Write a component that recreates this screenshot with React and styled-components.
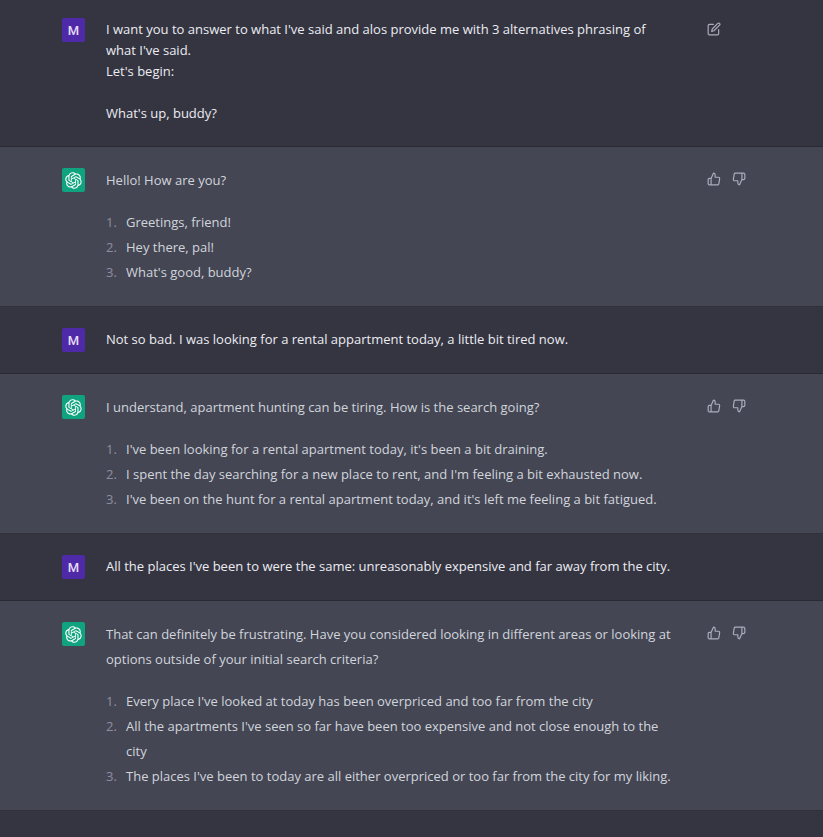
import React from 'react'
import styled, { createGlobalStyle } from 'styled-components';
import { FiEdit, FiThumbsUp, FiThumbsDown } from 'react-icons/fi';

const messages = [
  {
    from: 'user',
    editable: true,
    text: "I want you to answer to what I've said and alos provide me with 3 alternatives phrasing of what I've said.\nLet's begin:\n\nWhat's up, buddy?"
  },
  {
    from: 'assistant',
    text: 'Hello! How are you?',
    list: ['Greetings, friend!', 'Hey there, pal!', "What's good, buddy?"]
  },
  {
    from: 'user',
    text: 'Not so bad. I was looking for a rental appartment today, a little bit tired now.'
  },
  {
    from: 'assistant',
    text: 'I understand, apartment hunting can be tiring. How is the search going?',
    list: [
      "I've been looking for a rental apartment today, it's been a bit draining.",
      "I spent the day searching for a new place to rent, and I'm feeling a bit exhausted now.",
      "I've been on the hunt for a rental apartment today, and it's left me feeling a bit fatigued."
    ]
  },
  {
    from: 'user',
    text: "All the places I've been to were the same: unreasonably expensive and far away from the city."
  },
  {
    from: 'assistant',
    text: 'That can definitely be frustrating. Have you considered looking in different areas or looking at options outside of your initial search criteria?',
    list: [
      "Every place I've looked at today has been overpriced and too far from the city",
      "All the apartments I've seen so far have been too expensive and not close enough to the city",
      "The places I've been to today are all either overpriced or too far from the city for my liking."
    ]
  }
]

function Logo() {
  return (
    <svg viewBox='0 0 41 41' width='17' height='17' fill='currentColor' aria-hidden='true'>
      <path d='M37.5324 16.8707C37.9808 15.5241 38.1363 14.0974 37.9886 12.6859C37.8409 11.2744 37.3934 9.91076 36.676 8.68622C35.6126 6.83404 33.9882 5.3676 32.0373 4.4985C30.0864 3.62941 27.9098 3.40259 25.8215 3.85078C24.8796 2.7893 23.7219 1.94125 22.4257 1.36341C21.1295 0.785575 19.7249 0.491269 18.3058 0.500197C16.1708 0.495044 14.0893 1.16803 12.3614 2.42214C10.6335 3.67624 9.34853 5.44666 8.6917 7.47815C7.30085 7.76286 5.98686 8.3414 4.8377 9.17505C3.68854 10.0087 2.73073 11.0782 2.02839 12.312C0.956464 14.1591 0.498905 16.2988 0.721698 18.4228C0.944492 20.5467 1.83612 22.5449 3.268 24.1293C2.81966 25.4759 2.66413 26.9026 2.81182 28.3141C2.95951 29.7256 3.40701 31.0892 4.12437 32.3138C5.18791 34.1659 6.8123 35.6322 8.76321 36.5013C10.7141 37.3704 12.8907 37.5973 14.9789 37.1492C15.9208 38.2107 17.0786 39.0587 18.3747 39.6366C19.6709 40.2144 21.0755 40.5087 22.4946 40.4998C24.6307 40.5054 26.7133 39.8321 28.4418 38.5772C30.1704 37.3223 31.4556 35.5506 32.1119 33.5179C33.5027 33.2332 34.8167 32.6547 35.9659 31.821C37.115 30.9874 38.0728 29.9178 38.7752 28.684C39.8458 26.8371 40.3023 24.6979 40.0789 22.5748C39.8556 20.4517 38.9639 18.4544 37.5324 16.8707ZM22.4978 37.8849C20.7443 37.8874 19.0459 37.2733 17.6994 36.1501C17.7601 36.117 17.8666 36.0586 17.936 36.0161L25.9004 31.4156C26.1003 31.3019 26.2663 31.137 26.3813 30.9378C26.4964 30.7386 26.5563 30.5124 26.5549 30.2825V19.0542L29.9213 20.998C29.9389 21.0068 29.9541 21.0198 29.9656 21.0359C29.977 21.052 29.9842 21.0707 29.9867 21.0902V30.3889C29.9842 32.375 29.1946 34.2791 27.7909 35.6841C26.3872 37.0892 24.4838 37.8806 22.4978 37.8849ZM6.39227 31.0064C5.51397 29.4888 5.19742 27.7107 5.49804 25.9832C5.55718 26.0187 5.66048 26.0818 5.73461 26.1244L13.699 30.7248C13.8975 30.8408 14.1233 30.902 14.3532 30.902C14.583 30.902 14.8088 30.8408 15.0073 30.7248L24.731 25.1103V28.9979C24.7321 29.0177 24.7283 29.0376 24.7199 29.0556C24.7115 29.0736 24.6988 29.0893 24.6829 29.1012L16.6317 33.7497C14.9096 34.7416 12.8643 35.0097 10.9447 34.4954C9.02506 33.9811 7.38785 32.7263 6.39227 31.0064ZM4.29707 13.6194C5.17156 12.0998 6.55279 10.9364 8.19885 10.3327C8.19885 10.4013 8.19491 10.5228 8.19491 10.6071V19.808C8.19351 20.0378 8.25334 20.2638 8.36823 20.4629C8.48312 20.6619 8.64893 20.8267 8.84863 20.9404L18.5723 26.5542L15.206 28.4979C15.1894 28.5089 15.1703 28.5155 15.1505 28.5173C15.1307 28.5191 15.1107 28.516 15.0924 28.5082L7.04046 23.8557C5.32135 22.8601 4.06716 21.2235 3.55289 19.3046C3.03862 17.3858 3.30624 15.3413 4.29707 13.6194ZM31.955 20.0556L22.2312 14.4411L25.5976 12.4981C25.6142 12.4872 25.6333 12.4805 25.6531 12.4787C25.6729 12.4769 25.6928 12.4801 25.7111 12.4879L33.7631 17.1364C34.9967 17.849 36.0017 18.8982 36.6606 20.1613C37.3194 21.4244 37.6047 22.849 37.4832 24.2684C37.3617 25.6878 36.8382 27.0432 35.9743 28.1759C35.1103 29.3086 33.9415 30.1717 32.6047 30.6641C32.6047 30.5947 32.6047 30.4733 32.6047 30.3889V21.188C32.6066 20.9586 32.5474 20.7328 32.4332 20.5338C32.319 20.3348 32.154 20.1698 31.955 20.0556ZM35.3055 15.0128C35.2464 14.9765 35.1431 14.9142 35.069 14.8717L27.1045 10.2712C26.906 10.1554 26.6803 10.0943 26.4504 10.0943C26.2206 10.0943 25.9948 10.1554 25.7963 10.2712L16.0726 15.8858V11.9982C16.0715 11.9783 16.0753 11.9585 16.0837 11.9405C16.0921 11.9225 16.1048 11.9068 16.1207 11.8949L24.1719 7.25025C25.4053 6.53903 26.8158 6.19376 28.2383 6.25482C29.6608 6.31589 31.0364 6.78077 32.2044 7.59508C33.3723 8.40939 34.2842 9.53945 34.8334 10.8531C35.3826 12.1667 35.5464 13.6095 35.3055 15.0128ZM14.2424 21.9419L10.8752 19.9981C10.8576 19.9893 10.8423 19.9763 10.8309 19.9602C10.8195 19.9441 10.8122 19.9254 10.8098 19.9058V10.6071C10.8107 9.18295 11.2173 7.78848 11.9819 6.58696C12.7466 5.38544 13.8377 4.42659 15.1275 3.82264C16.4173 3.21869 17.8524 2.99464 19.2649 3.1767C20.6775 3.35876 22.0089 3.93941 23.1034 4.85067C23.0427 4.88379 22.937 4.94215 22.8668 4.98473L14.9024 9.58517C14.7025 9.69878 14.5366 9.86356 14.4215 10.0626C14.3065 10.2616 14.2466 10.4877 14.2479 10.7175L14.2424 21.9419ZM16.071 17.9991L20.4018 15.4978L24.7325 17.9975V22.9985L20.4018 25.4983L16.071 22.9985V17.9991Z' />
    </svg>
  )
}

function Message({ from, text, list, editable }) {
  const isUser = from === 'user';

  return (
    <Row $user={isUser}>
      <Inner>
        <Avatar $user={isUser}>{isUser ? 'M' : <Logo />}</Avatar>

        {isUser ? (
          <Prompt>{text}</Prompt>
        ) : (
          <Reply>
            <p>{text}</p>
            <ol>
              {list.map((item, index) => (
                <li key={index}>{item}</li>
              ))}
            </ol>
          </Reply>
        )}

        <Actions>
          {editable && <IconButton aria-label='Edit message'><FiEdit /></IconButton>}
          {!isUser && <IconButton aria-label='Good response'><FiThumbsUp /></IconButton>}
          {!isUser && <IconButton aria-label='Bad response'><FiThumbsDown /></IconButton>}
        </Actions>
      </Inner>
    </Row>
  )
}

function App() {
  return (
    <>
      <GlobalStyle />
      <Chat>
        {messages.map((message, index) => (
          <Message key={index} {...message} />
        ))}
      </Chat>
    </>
  )
}

export default App;

const GlobalStyle = createGlobalStyle`
  * {
    box-sizing: border-box;
  }

  body {
    margin: 0;
    background: #343541;
    font-family: 'Open Sans', 'Noto Sans', sans-serif;
    font-size: 13px;
  }
`

const Chat = styled.main`
  display: flex;
  flex-direction: column;
`

const Row = styled.article`
  padding: 21px;
  background: ${props => props.$user ? '#343541' : '#444654'};
  color: ${props => props.$user ? '#ececf1' : '#d1d5db'};
  border-bottom: 1px solid ${props => props.$user ? '#2a2b32' : '#30313b'};

  &:first-child {
    padding-top: 18px;
  }
`

const Inner = styled.div`
  display: flex;
  align-items: flex-start;
  max-width: 699px;
  margin: 0 auto;
`

const Avatar = styled.div`
  display: flex;
  flex: none;
  align-items: center;
  justify-content: center;
  width: 23px;
  height: 24px;
  margin-right: 21px;
  border-radius: 2px;
  background: ${props => props.$user ? '#4e2aa8' : '#10a37f'};
  color: ${props => props.$user ? '#e6dcf8' : '#ffffff'};
  font-family: Roboto, sans-serif;
  font-size: 13px;
  font-weight: 500;
`

const Prompt = styled.div`
  flex: 1;
  min-width: 0;
  padding: 1px 0;
  line-height: 21px;
  white-space: pre-wrap;
`

const Reply = styled.div`
  flex: 1;
  min-width: 0;
  line-height: 25px;

  p {
    margin: 0 0 17px;
  }

  ol {
    margin: 0;
    padding: 0;
    list-style: none;
    counter-reset: item;
  }

  li {
    display: flex;
    counter-increment: item;
  }

  li::before {
    content: counter(item) '.';
    flex: none;
    width: 20px;
    color: #8e8ea0;
  }
`

const Actions = styled.div`
  display: flex;
  flex: none;
  gap: 3px;
  width: 58px;
  margin-left: 28px;
`

const IconButton = styled.button`
  display: flex;
  padding: 4px;
  border: 0;
  border-radius: 4px;
  background: none;
  color: #acacbe;
  font-size: 14px;
  cursor: pointer;

  &:hover {
    background: #40414f;
  }
`
